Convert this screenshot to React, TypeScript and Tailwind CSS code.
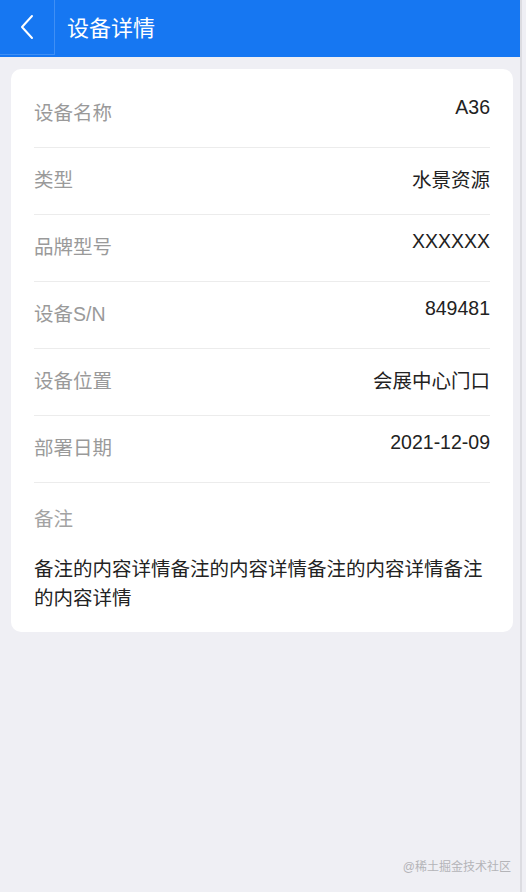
const rows: { label: string; value: string; latin?: boolean }[] = [
  { label: "设备名称", value: "A36", latin: true },
  { label: "类型", value: "水景资源" },
  { label: "品牌型号", value: "XXXXXX", latin: true },
  { label: "设备S/N", value: "849481", latin: true },
  { label: "设备位置", value: "会展中心门口" },
  { label: "部署日期", value: "2021-12-09", latin: true },
];

function BackIcon() {
  return (
    <svg width="16" height="26" viewBox="0 0 16 26" fill="none">
      <path d="M13 2 L3 13 L13 24" stroke="white" strokeWidth="2" strokeLinecap="round" strokeLinejoin="round" />
    </svg>
  );
}

export default function App() {
  return (
    <div
      className="relative flex min-h-screen w-full bg-[#efeff4]"
      style={{ fontFamily: '"Liberation Sans", "Noto Sans CJK SC", sans-serif' }}
    >
      <div className="flex w-[522px] flex-col border-r-2 border-[#dcdce1]">
        {/* 顶部导航 */}
        <header className="flex h-[57px] items-center bg-[#1677f2]">
          <button className="flex h-[55px] w-[55px] items-center justify-center self-start border-b border-r border-[#3f8ff5]">
            <BackIcon />
          </button>
          <h1 className="ml-[12px] text-[22px] text-white">设备详情</h1>
        </header>

        {/* 详情卡片 */}
        <div className="ml-[11px] mr-[7px] mt-[12px] rounded-[10px] bg-white pt-[12px]">
          {rows.map((r) => (
            <div key={r.label} className="mx-[23px] flex h-[67px] items-center justify-between border-b border-[#ececec]">
              <span className="text-[19.5px] text-[#9a9a9a]">{r.label}</span>
              <span className={`text-[19.5px] text-[#222] ${r.latin ? "mb-3" : ""}`}>{r.value}</span>
            </div>
          ))}
          <div className="px-[23px] pb-[19px] pt-[22px]">
            <div className="text-[19.5px] leading-[28px] text-[#a3a3a3]">备注</div>
            <p className="mt-[22px] text-[19.5px] leading-[29px] text-[#222]">
              备注的内容详情备注的内容详情备注的内容详情备注的内容详情
            </p>
          </div>
        </div>
      </div>

      <span className="absolute bottom-[16px] right-[15px] text-[12px] text-[#b4b4b8]">@稀土掘金技术社区</span>
    </div>
  );
}
